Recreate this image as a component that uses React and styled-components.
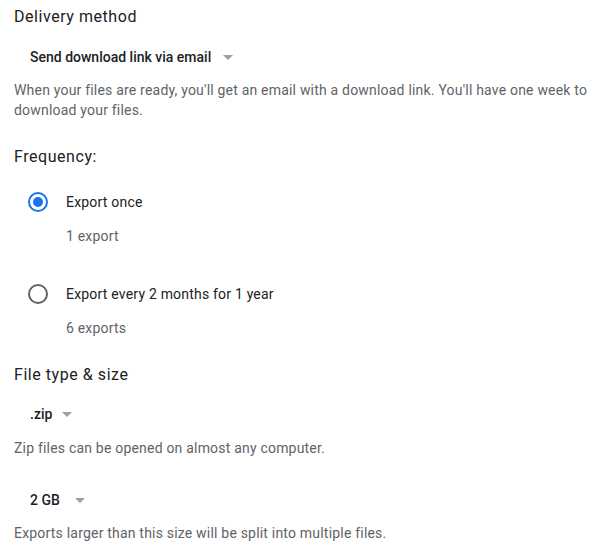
import React from "react";
import styled, { createGlobalStyle } from "styled-components";

const GlobalStyle = createGlobalStyle`
  body {
    margin: 0;
    background: #fff;
    font-family: Roboto, "Liberation Sans", Arial, sans-serif;
  }
`;

const Page = styled.div`
  padding: 5px 0 0 14px;
  width: 614px;
  box-sizing: border-box;
`;

const Heading = styled.h2`
  margin: ${(p) => p.$top || 0}px 0 0 0;
  font-size: 16px;
  line-height: 24px;
  font-weight: 400;
  letter-spacing: 0.55px;
  color: #202124;
`;

const Select = styled.div`
  display: flex;
  align-items: center;
  height: 36px;
  padding-left: 16px;
  margin-top: ${(p) => p.$top || 0}px;
  font-size: 14px;
  font-weight: 500;
  color: #202124;
`;

const SelectLabel = styled.span`
  min-width: ${(p) => p.$min || 0}px;
`;

const Arrow = styled.span`
  width: 0;
  height: 0;
  margin-left: ${(p) => p.$gap || 10}px;
  border-left: 5px solid transparent;
  border-right: 5px solid transparent;
  border-top: 5px solid #9aa0a6;
`;

const Help = styled.p`
  margin: ${(p) => p.$top || 0}px 0 0 0;
  font-size: 14px;
  line-height: 20px;
  letter-spacing: 0.2px;
  color: #5f6368;
`;

const Options = styled.div`
  display: flex;
  flex-direction: column;
  gap: 36px;
  margin-top: 21px;
  padding-left: 14px;
`;

const Option = styled.div`
  display: grid;
  grid-template-columns: 20px 1fr;
  column-gap: 18px;
  row-gap: 12px;
`;

const Radio = styled.span`
  width: 20px;
  height: 20px;
  box-sizing: border-box;
  border-radius: 50%;
  border: 2px solid ${(p) => (p.$checked ? "#1a73e8" : "#5f6368")};
  display: flex;
  align-items: center;
  justify-content: center;
  align-self: center;

  &::after {
    content: "";
    width: 10px;
    height: 10px;
    border-radius: 50%;
    background: ${(p) => (p.$checked ? "#1a73e8" : "transparent")};
  }
`;

const OptionLabel = styled.span`
  font-size: 14px;
  line-height: 24px;
  letter-spacing: 0.2px;
  color: #202124;
`;

const OptionSub = styled.span`
  grid-column: 2;
  font-size: 14px;
  line-height: 20px;
  letter-spacing: 0.2px;
  color: #5f6368;
`;

const frequencies = [
  { label: "Export once", sub: "1 export", checked: true },
  { label: "Export every 2 months for 1 year", sub: "6 exports", checked: false },
];

const App = () => {
  return (
    <>
      <GlobalStyle />
      <Page>
        <Heading>Delivery method</Heading>
        <Select $top={10}>
          <SelectLabel>Send download link via email</SelectLabel>
          <Arrow $gap={12} />
        </Select>
        <Help $top={5}>
          When your files are ready, you'll get an email with a download link.
          You'll have one week to download your files.
        </Help>

        <Heading $top={25}>Frequency:</Heading>
        <Options>
          {frequencies.map((f) => (
            <Option key={f.label}>
              <Radio $checked={f.checked} />
              <OptionLabel>{f.label}</OptionLabel>
              <OptionSub>{f.sub}</OptionSub>
            </Option>
          ))}
        </Options>

        <Heading $top={25}>File type &amp; size</Heading>
        <Select $top={9}>
          <SelectLabel>.zip</SelectLabel>
          <Arrow $gap={10} />
        </Select>
        <Help $top={6}>Zip files can be opened on almost any computer.</Help>
        <Select $top={24}>
          <SelectLabel $min={36}>2 GB</SelectLabel>
          <Arrow $gap={9} />
        </Select>
        <Help $top={5}>
          Exports larger than this size will be split into multiple files.
        </Help>
      </Page>
    </>
  );
};

export default App;
